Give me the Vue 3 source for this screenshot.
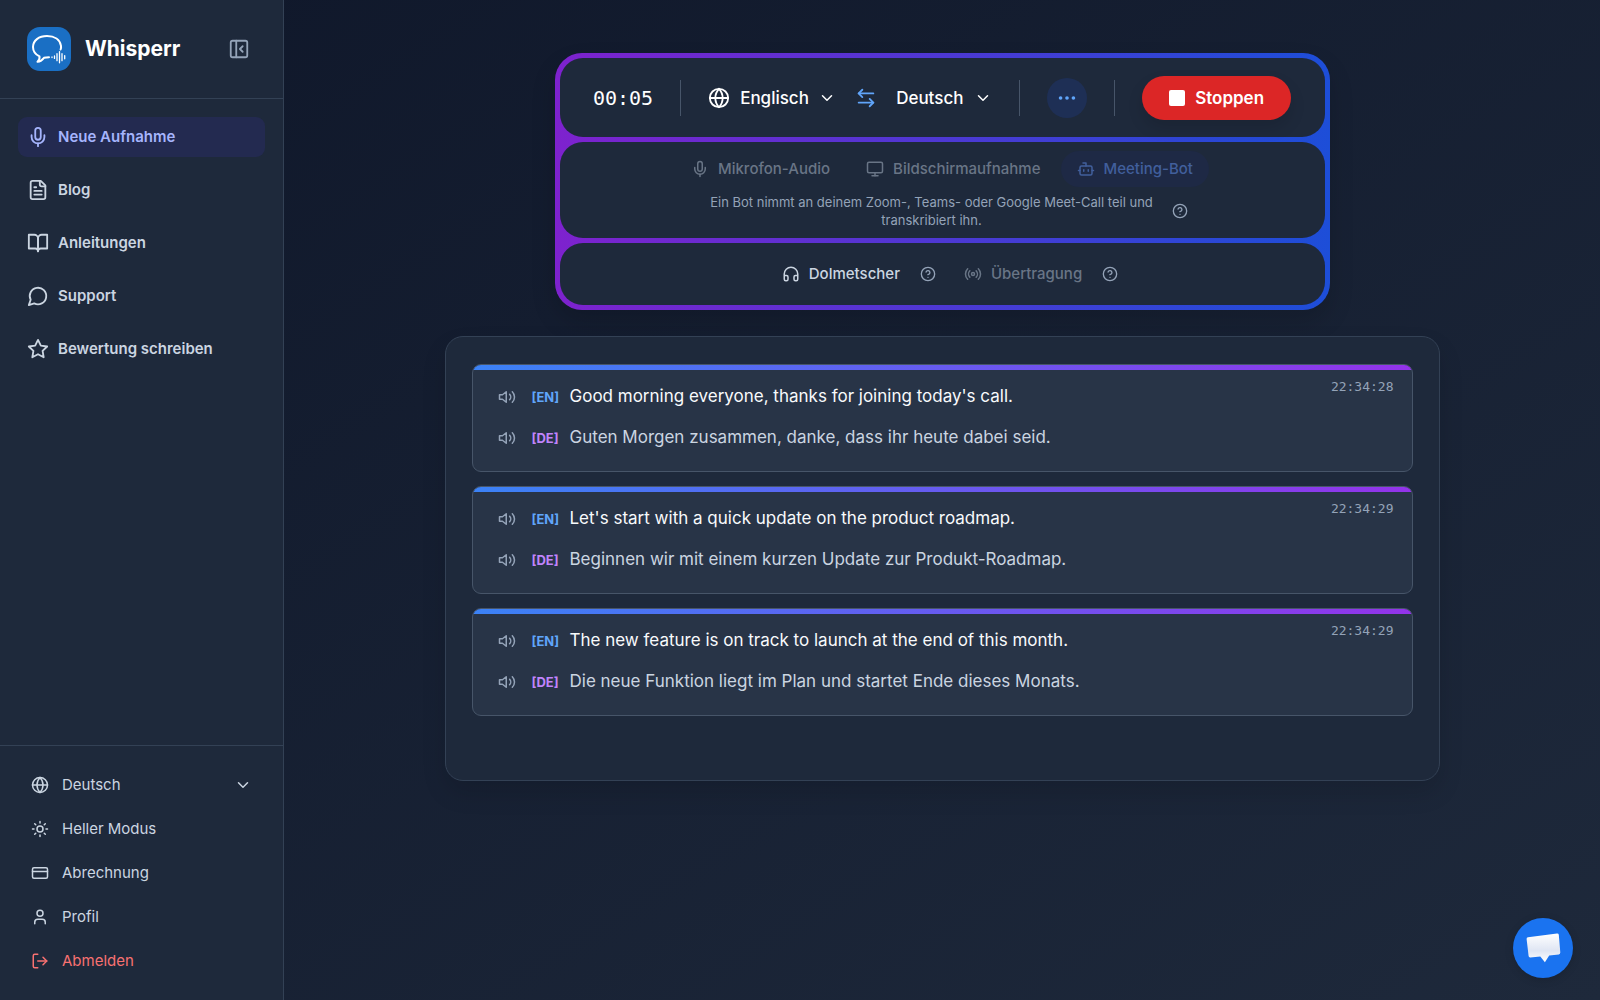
<script setup>
import { h, ref } from 'vue'

const shapes = {
  mic: '<path d="M12 2a3 3 0 0 0-3 3v7a3 3 0 0 0 6 0V5a3 3 0 0 0-3-3Z"/><path d="M19 10v2a7 7 0 0 1-14 0v-2"/><path d="M12 19v3"/>',
  file: '<path d="M15 2H6a2 2 0 0 0-2 2v16a2 2 0 0 0 2 2h12a2 2 0 0 0 2-2V7Z"/><path d="M14 2v4a2 2 0 0 0 2 2h4"/><path d="M10 9H8"/><path d="M16 13H8"/><path d="M16 17H8"/>',
  book: '<path d="M2 3h6a4 4 0 0 1 4 4v14a3 3 0 0 0-3-3H2z"/><path d="M22 3h-6a4 4 0 0 0-4 4v14a3 3 0 0 1 3-3h7z"/>',
  message: '<path d="M7.9 20A9 9 0 1 0 4 16.1L2 22Z"/>',
  star: '<path d="m12 2 3.09 6.26L22 9.27l-5 4.87 1.18 6.88L12 17.77l-6.18 3.25L7 14.14 2 9.27l6.91-1.01L12 2z"/>',
  globe: '<circle cx="12" cy="12" r="10"/><path d="M12 2a14.5 14.5 0 0 0 0 20 14.5 14.5 0 0 0 0-20"/><path d="M2 12h20"/>',
  sun: '<circle cx="12" cy="12" r="4"/><path d="M12 2v2M12 20v2M4.93 4.93l1.41 1.41M17.66 17.66l1.41 1.41M2 12h2M20 12h2M6.34 17.66l-1.41 1.41M19.07 4.93l-1.41 1.41"/>',
  card: '<rect x="2" y="5" width="20" height="14" rx="2"/><path d="M2 10h20"/>',
  user: '<path d="M19 21v-2a4 4 0 0 0-4-4H9a4 4 0 0 0-4 4v2"/><circle cx="12" cy="7" r="4"/>',
  logout: '<path d="M9 21H5a2 2 0 0 1-2-2V5a2 2 0 0 1 2-2h4"/><path d="m16 17 5-5-5-5"/><path d="M21 12H9"/>',
  chevron: '<path d="m6 9 6 6 6-6"/>',
  panel: '<rect x="3" y="3" width="18" height="18" rx="2"/><path d="M9 3v18"/><path d="m16 15-3-3 3-3"/>',
  swap: '<path d="M8 3 4 7l4 4"/><path d="M4 7h16"/><path d="m16 21 4-4-4-4"/><path d="M20 17H4"/>',
  dots: '<circle cx="12" cy="12" r="1"/><circle cx="19" cy="12" r="1"/><circle cx="5" cy="12" r="1"/>',
  monitor: '<rect x="2" y="3" width="20" height="14" rx="2"/><path d="M8 21h8"/><path d="M12 17v4"/>',
  bot: '<path d="M12 8V4H8"/><rect x="4" y="8" width="16" height="12" rx="2"/><path d="M2 14h2"/><path d="M20 14h2"/><path d="M15 13v2"/><path d="M9 13v2"/>',
  headphones: '<path d="M3 14h3a2 2 0 0 1 2 2v3a2 2 0 0 1-2 2H5a2 2 0 0 1-2-2v-7a9 9 0 0 1 18 0v7a2 2 0 0 1-2 2h-1a2 2 0 0 1-2-2v-3a2 2 0 0 1 2-2h3"/>',
  radio: '<path d="M4.9 19.1C1 15.2 1 8.8 4.9 4.9"/><path d="M7.8 16.2c-2.3-2.3-2.3-6.1 0-8.5"/><circle cx="12" cy="12" r="2"/><path d="M16.2 7.8c2.3 2.3 2.3 6.1 0 8.5"/><path d="M19.1 4.9C23 8.8 23 15.1 19.1 19"/>',
  help: '<circle cx="12" cy="12" r="10"/><path d="M9.09 9a3 3 0 0 1 5.83 1c0 2-3 3-3 3"/><path d="M12 17h.01"/>',
  volume: '<path d="M11 5 6 9H2v6h4l5 4z"/><path d="M15.54 8.46a5 5 0 0 1 0 7.07"/><path d="M19.07 4.93a10 10 0 0 1 0 14.14"/>'
}

const Icon = (props) =>
  h('svg', {
    width: props.size,
    height: props.size,
    viewBox: '0 0 24 24',
    fill: 'none',
    stroke: 'currentColor',
    'stroke-width': 2,
    'stroke-linecap': 'round',
    'stroke-linejoin': 'round',
    'aria-hidden': 'true',
    innerHTML: shapes[props.name]
  })
Icon.props = ['name', 'size']

const nav = [
  { icon: 'mic', label: 'Neue Aufnahme', active: true },
  { icon: 'file', label: 'Blog' },
  { icon: 'book', label: 'Anleitungen' },
  { icon: 'message', label: 'Support' },
  { icon: 'star', label: 'Bewertung schreiben' }
]

const sources = [
  { icon: 'mic', label: 'Mikrofon-Audio' },
  { icon: 'monitor', label: 'Bildschirmaufnahme' },
  { icon: 'bot', label: 'Meeting-Bot', active: true }
]

const entries = [
  {
    time: '22:34:28',
    en: "Good morning everyone, thanks for joining today's call.",
    de: 'Guten Morgen zusammen, danke, dass ihr heute dabei seid.'
  },
  {
    time: '22:34:29',
    en: "Let's start with a quick update on the product roadmap.",
    de: 'Beginnen wir mit einem kurzen Update zur Produkt-Roadmap.'
  },
  {
    time: '22:34:29',
    en: 'The new feature is on track to launch at the end of this month.',
    de: 'Die neue Funktion liegt im Plan und startet Ende dieses Monats.'
  }
]

const from = ref('Englisch')
const to = ref('Deutsch')
const locale = ref('Deutsch')

function swap() {
  const previous = from.value
  from.value = to.value
  to.value = previous
}
</script>

<template>
  <div class="app">
    <aside class="sidebar">
      <header class="brand">
        <svg class="logo" viewBox="0 0 44 44" fill="none" stroke="#fff" stroke-linecap="round" stroke-linejoin="round" aria-hidden="true">
          <path stroke-width="2" d="M33.600 22.500C34.200 21 34.200 20 34 18.800C33 12.500 27.500 9 20 9C11.800 9 6 13.600 6 20C6 24.200 8.400 27.400 12.500 29.400C12.800 31.600 12 33.400 10.500 34.800C13.600 34.600 15.600 32.600 17 30.800Q19 30.300 22 30.300" />
          <path stroke-width="1.3" d="M25 29.900v.6M27.500 29v2.400M30 26.700v7M32.500 24.600v11.200M35 26.700v7M37.700 28.600v3.200" />
        </svg>
        <h1>Whisperr</h1>
        <button class="plain collapse" type="button" aria-label="Seitenleiste einklappen"><Icon name="panel" size="22" /></button>
      </header>

      <nav class="nav">
        <a v-for="item in nav" :key="item.label" href="#" :class="{ active: item.active }">
          <Icon :name="item.icon" size="22" />{{ item.label }}
        </a>
      </nav>

      <div class="account">
        <label class="row picker">
          <Icon name="globe" size="18" />
          <select v-model="locale" aria-label="Sprache">
            <option>Deutsch</option>
            <option>Englisch</option>
          </select>
          <Icon class="arrow" name="chevron" size="18" />
        </label>
        <button class="row" type="button"><Icon name="sun" size="18" />Heller Modus</button>
        <a class="row" href="#"><Icon name="card" size="18" />Abrechnung</a>
        <a class="row" href="#"><Icon name="user" size="18" />Profil</a>
        <button class="row danger" type="button"><Icon name="logout" size="18" />Abmelden</button>
      </div>
    </aside>

    <main class="main">
      <section class="recorder">
        <div class="segment controls">
          <time class="timer">00:05</time>
          <span class="divider"></span>
          <div class="languages">
            <label class="language">
              <Icon name="globe" size="22" />
              <select v-model="from" aria-label="Ausgangssprache">
                <option>Englisch</option>
                <option>Deutsch</option>
              </select>
              <Icon class="arrow" name="chevron" size="18" />
            </label>
            <button class="plain swap" type="button" aria-label="Sprachen tauschen" @click="swap"><Icon name="swap" size="22" /></button>
            <label class="language">
              <select v-model="to" aria-label="Zielsprache">
                <option>Deutsch</option>
                <option>Englisch</option>
              </select>
              <Icon class="arrow" name="chevron" size="18" />
            </label>
          </div>
          <span class="divider"></span>
          <button class="more" type="button" aria-label="Mehr Optionen"><Icon name="dots" size="22" /></button>
          <span class="divider"></span>
          <button class="stop" type="button"><span class="square"></span>Stoppen</button>
        </div>

        <div class="segment source">
          <div class="tabs">
            <button v-for="item in sources" :key="item.label" type="button" class="tab" :class="{ active: item.active }" disabled>
              <Icon :name="item.icon" size="18" />{{ item.label }}
            </button>
          </div>
          <div class="hint">
            <p>Ein Bot nimmt an deinem Zoom-, Teams- oder Google Meet-Call teil und transkribiert ihn.</p>
            <button class="plain help" type="button" aria-label="Hilfe"><Icon name="help" size="16" /></button>
          </div>
        </div>

        <div class="segment modes">
          <div class="pair">
            <button class="mode" type="button"><Icon name="headphones" size="18" />Dolmetscher</button>
            <button class="plain help" type="button" aria-label="Hilfe zu Dolmetscher"><Icon name="help" size="16" /></button>
          </div>
          <div class="pair">
            <button class="mode off" type="button"><Icon name="radio" size="18" />Übertragung</button>
            <button class="plain help" type="button" aria-label="Hilfe zu Übertragung"><Icon name="help" size="16" /></button>
          </div>
        </div>
      </section>

      <section class="transcript">
        <article v-for="(entry, i) in entries" :key="i" class="entry">
          <div class="lines">
            <div class="line">
              <button class="plain speak" type="button" aria-label="Original vorlesen"><Icon name="volume" size="18" /></button>
              <span class="tag">[EN]</span>
              <p>{{ entry.en }}</p>
            </div>
            <div class="line translated">
              <button class="plain speak" type="button" aria-label="Übersetzung vorlesen"><Icon name="volume" size="18" /></button>
              <span class="tag">[DE]</span>
              <p>{{ entry.de }}</p>
            </div>
          </div>
          <time>{{ entry.time }}</time>
        </article>
      </section>
    </main>

    <button class="chat" type="button" aria-label="Chat öffnen">
      <svg width="35" height="30" viewBox="0 0 35 30" aria-hidden="true">
        <defs>
          <linearGradient id="bubble" x1="0" y1="0" x2="0" y2="1">
            <stop offset="0" stop-color="#fff" />
            <stop offset="0.6" stop-color="#dfe5f3" />
            <stop offset="1" stop-color="#fff" />
          </linearGradient>
        </defs>
        <path fill="url(#bubble)" d="M2 4.200 31 .4Q32.600.3 32.800 1.800L34.300 19.500Q34.300 21.200 32.800 21.400L23.200 22.400 18.900 29.200 14.300 23.400 4.300 24.400Q2.800 24.500 2.600 23L.6 6Q.5 4.400 2 4.200Z" />
      </svg>
    </button>
  </div>
</template>

<style>
body {
  margin: 0;
  background: #0f172a;
}
</style>

<style scoped>
.app {
  display: flex;
  min-height: 100vh;
  background: linear-gradient(to bottom right, #0f172a, #1e293b);
  color: #cbd5e1;
  font-family: Inter, "Liberation Sans", sans-serif;
  font-size: 15px;
  line-height: 24px;
}
.app * {
  box-sizing: border-box;
}
svg {
  display: block;
  flex: none;
}
h1,
p {
  margin: 0;
}
a {
  color: inherit;
  text-decoration: none;
}
button,
select {
  margin: 0;
  padding: 0;
  border: 0;
  background: none;
  color: inherit;
  font: inherit;
  cursor: pointer;
}
select {
  appearance: none;
  outline: none;
}
option {
  background: #1e293b;
}

.sidebar {
  position: sticky;
  top: 0;
  display: flex;
  flex: none;
  flex-direction: column;
  width: 284px;
  height: 100vh;
  border-right: 1px solid #334155;
  background: #1e293b;
}
.brand {
  display: flex;
  align-items: center;
  gap: 14px;
  height: 99px;
  padding: 0 33px 0 27px;
  border-bottom: 1px solid #334155;
}
.logo {
  width: 44px;
  height: 44px;
  border-radius: 13px;
  background: #1a6fc4;
}
h1 {
  color: #fff;
  font-size: 21px;
  line-height: 32px;
  font-weight: 700;
}
.collapse {
  margin-left: auto;
  color: #94a3b8;
}
.nav {
  display: flex;
  flex: 1;
  flex-direction: column;
  gap: 13px;
  padding: 18px;
}
.nav a {
  display: flex;
  align-items: center;
  gap: 9px;
  height: 40px;
  padding: 0 9px;
  border-radius: 9px;
  font-weight: 600;
}
.nav .active {
  background: #232a50;
  color: #a5b4fc;
}
.account {
  display: flex;
  flex-direction: column;
  padding: 17px 18px;
  border-top: 1px solid #334155;
}
.row {
  position: relative;
  display: flex;
  align-items: center;
  gap: 13px;
  height: 44px;
  padding: 0 13px;
  text-align: left;
}
.picker select {
  flex: 1;
}
.danger {
  color: #f87171;
}
.picker .arrow {
  position: absolute;
  right: 13px;
  pointer-events: none;
}

.main {
  display: flex;
  flex: 1;
  flex-direction: column;
  align-items: center;
  gap: 26px;
  padding: 53px 27px;
}
.recorder {
  display: flex;
  flex-direction: column;
  gap: 5px;
  width: 100%;
  max-width: 775px;
  padding: 5px;
  border-radius: 27px;
  background: linear-gradient(to right, #7e22ce, #1d4ed8);
  box-shadow: 0 12px 24px rgba(0, 0, 0, 0.15);
}
.segment {
  border-radius: 23px;
  background: #1e293b;
}
.controls {
  display: flex;
  align-items: center;
  justify-content: center;
  gap: 27px;
  height: 79px;
  color: #fff;
}
.timer {
  font-family: "DejaVu Sans Mono", monospace;
  font-size: 20px;
}
.divider {
  width: 1px;
  height: 36px;
  background: #475569;
}
.languages {
  display: flex;
  align-items: center;
  gap: 19px;
}
.language {
  position: relative;
  display: flex;
  align-items: center;
  gap: 10px;
  font-size: 17px;
  font-weight: 500;
}
.language select {
  padding-right: 27px;
}
.language .arrow {
  position: absolute;
  right: 0;
  pointer-events: none;
}
.swap {
  color: #60a5fa;
}
.more {
  display: grid;
  place-items: center;
  width: 40px;
  height: 40px;
  border-radius: 50%;
  background: #1e2f55;
  color: #60a5fa;
}
.stop {
  display: flex;
  align-items: center;
  gap: 10px;
  height: 44px;
  padding: 0 27px;
  border-radius: 22px;
  background: #dc2626;
  box-shadow: 0 8px 16px rgba(0, 0, 0, 0.12);
  font-size: 17px;
  font-weight: 600;
}
.square {
  width: 16px;
  height: 16px;
  border-radius: 2px;
  background: #fff;
}
.source {
  padding: 9px 18px;
  min-height: 95px;
}
.tabs {
  display: flex;
  justify-content: center;
  gap: 4px;
}
.tab {
  display: flex;
  align-items: center;
  gap: 9px;
  height: 36px;
  padding: 0 16px;
  border-radius: 18px;
  color: #697586;
  font-weight: 500;
}
.tab.active {
  background: #1e2945;
  color: #415f9c;
}
.hint {
  display: flex;
  align-items: center;
  justify-content: center;
  gap: 5px;
  padding-top: 6px;
}
.hint p {
  max-width: 470px;
  color: #94a3b8;
  font-size: 13px;
  line-height: 18px;
  text-align: center;
}
.help {
  color: #94a3b8;
}
.modes {
  display: flex;
  align-items: center;
  justify-content: center;
  gap: 12px;
  height: 62px;
}
.pair {
  display: flex;
  align-items: center;
  gap: 4px;
}
.mode {
  display: flex;
  align-items: center;
  gap: 9px;
  padding: 0 16px;
  font-weight: 500;
}
.off {
  color: #697586;
}

.transcript {
  display: flex;
  flex-direction: column;
  gap: 14px;
  width: 100%;
  max-width: 995px;
  min-height: 445px;
  padding: 27px 26px;
  border: 1px solid #334155;
  border-radius: 18px;
  background: #1e293b;
  box-shadow: 0 12px 24px rgba(0, 0, 0, 0.12);
}
.entry {
  position: relative;
  display: flex;
  align-items: flex-start;
  justify-content: space-between;
  overflow: hidden;
  min-height: 108px;
  padding: 13px 18px 18px 25px;
  border: 1px solid #475569;
  border-radius: 9px;
  background: #283447;
}
.entry::before {
  content: "";
  position: absolute;
  inset: 0 0 auto;
  height: 5px;
  background: linear-gradient(to right, #3b82f6, #9333ea);
}
.lines {
  display: flex;
  flex-direction: column;
  gap: 10px;
  padding-top: 3px;
}
.line {
  display: flex;
  align-items: baseline;
  line-height: 30px;
  color: #f8fafc;
  font-size: 17px;
}
.speak {
  align-self: center;
  margin-right: 16px;
  color: #94a3b8;
}
.tag {
  width: 38px;
  color: #60a5fa;
  font-size: 13px;
  font-weight: 700;
}
.translated {
  color: #cbd5e1;
}
.translated .tag {
  color: #c084fc;
}
.entry time {
  color: #94a3b8;
  font-family: "DejaVu Sans Mono", monospace;
  font-size: 13px;
  line-height: 18px;
}

.chat {
  position: fixed;
  right: 27px;
  bottom: 22px;
  display: grid;
  place-items: center;
  width: 60px;
  height: 60px;
  border-radius: 50%;
  background: #1a73f0;
  box-shadow: 0 2px 8px rgba(0, 0, 0, 0.15);
}
</style>
